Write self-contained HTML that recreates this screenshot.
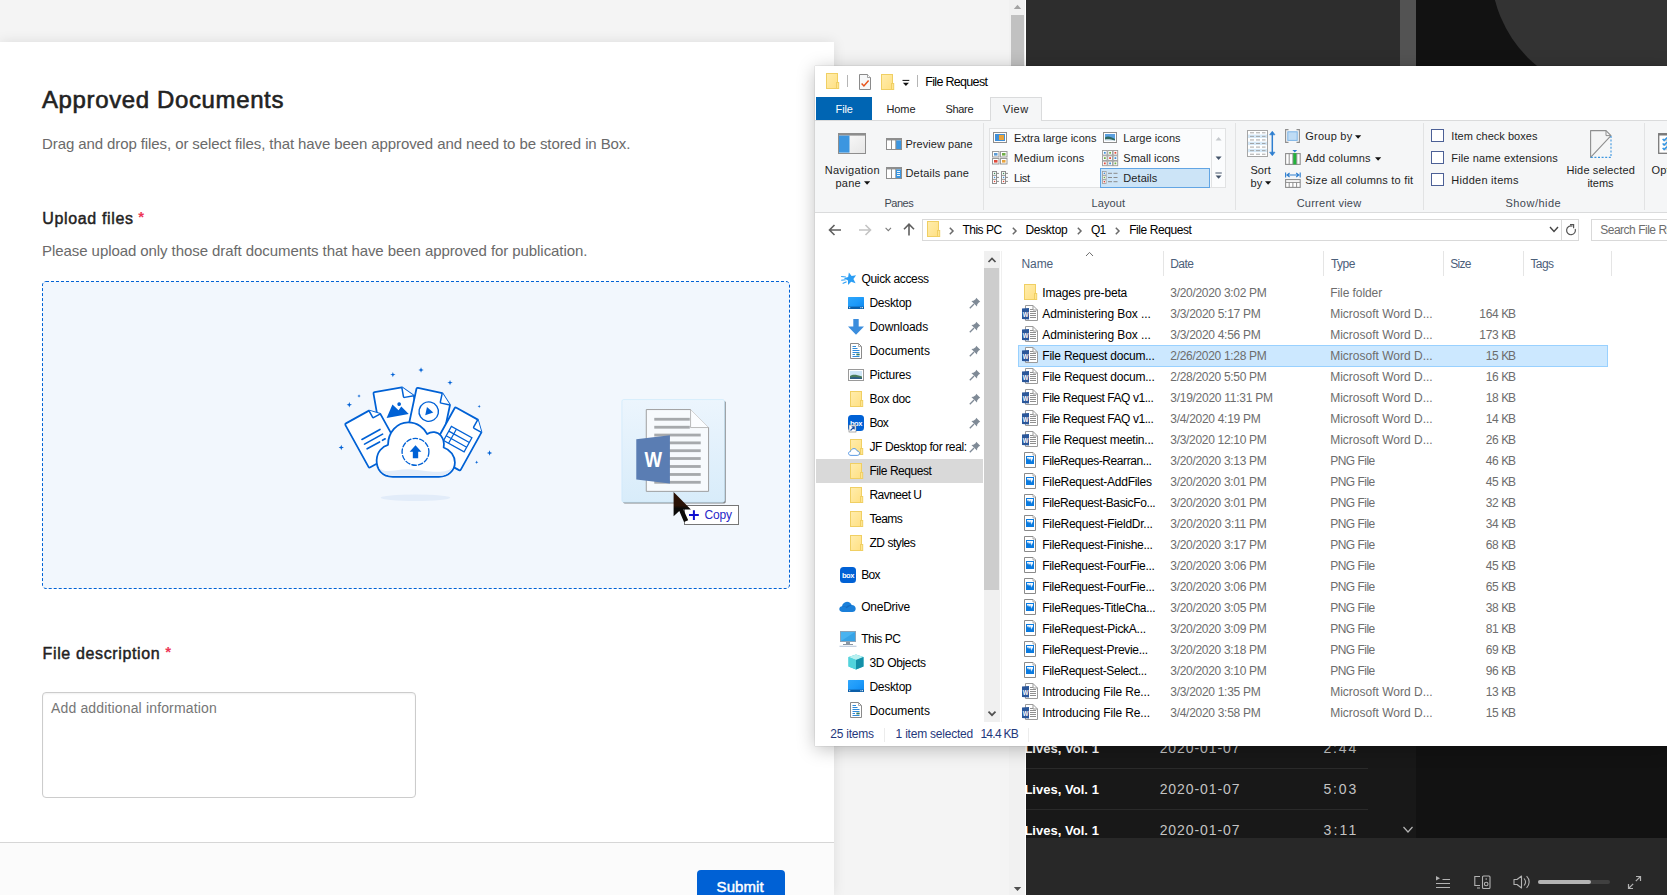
<!DOCTYPE html>
<html lang="en"><head><meta charset="utf-8"><title>Approved Documents</title>
<style>
html,body{margin:0;padding:0;}
body{width:1667px;height:895px;overflow:hidden;position:relative;background:#f4f4f4;font-family:"Liberation Sans",sans-serif;}
.t{position:absolute;white-space:pre;line-height:20px;font-size:12px;}
.layer{position:absolute;left:0;top:0;width:1667px;height:895px;overflow:hidden;}
svg{overflow:visible}
</style></head>
<body>
<svg width="0" height="0" style="position:absolute"><defs>
<linearGradient id="gfold" x1="0" y1="0" x2="1" y2="1"><stop offset="0" stop-color="#ffedad"/><stop offset="1" stop-color="#ffe083"/></linearGradient>
<linearGradient id="gdesk" x1="0" y1="0" x2="1" y2="1"><stop offset="0" stop-color="#2fa6fb"/><stop offset=".5" stop-color="#1e9bfa"/><stop offset="1" stop-color="#0c86ee"/></linearGradient>
</defs></svg>
<div class="layer" id="page"><div style="position:absolute;left:0px;top:42px;width:834px;height:853px;background:#fff;box-shadow:0 0 12px rgba(0,0,0,.10)"></div>
<div style="position:absolute;left:0px;top:842px;width:834px;height:53px;background:#fbfbfb;border-top:1px solid #d6d6d6;box-sizing:border-box"></div>
<span class="t" id="t1" style="top:90px;font-size:24px;color:#222;letter-spacing:0.628px;left:41.96px;-webkit-text-stroke:0.6px #222;">Approved Documents</span>
<span class="t" id="t2" style="top:134px;font-size:15px;color:#6a6a6a;letter-spacing:-0.097px;left:42.10px;">Drag and drop files, or select files, that have been approved and need to be stored in Box.</span>
<span class="t" id="t3" style="top:209px;font-size:16px;color:#222;letter-spacing:0.646px;left:42.24px;-webkit-text-stroke:0.45px #222;">Upload files</span>
<span class="t" id="t4" style="top:207px;font-size:15px;color:#ed3757;font-weight:700;letter-spacing:-0.044px;left:138.30px;">*</span>
<span class="t" id="t5" style="top:241px;font-size:15px;color:#6a6a6a;letter-spacing:-0.074px;left:42.10px;">Please upload only those draft documents that have been approved for publication.</span>
<div style="position:absolute;left:42px;top:281px;width:748px;height:308px;background:#f2f7fd;border-radius:4px"></div>
<svg style="position:absolute;left:42px;top:281px;" width="748" height="308" viewBox="0 0 748 308"><rect x="0.5" y="0.5" width="747" height="307" rx="3.5" fill="none" stroke="#0061d5" stroke-width="1" stroke-dasharray="3 2"/></svg>
<svg style="position:absolute;left:330px;top:360px;" width="170" height="150" viewBox="0 0 1014 895"><ellipse cx="510" cy="822" rx="208" ry="19" fill="#e2ecf9"/><g transform="translate(258,193) rotate(-10)"><path d="M8 0 H173 L235 62 V252 Q235 260 227 260 H8 Q0 260 0 252 V8 Q0 0 8 0Z" fill="#fff" stroke="#0061d5" stroke-width="10.5" stroke-linejoin="round"/><path d="M173 0 V56 Q173 62 179 62 H235" fill="#fff" stroke="#0061d5" stroke-width="9" stroke-linejoin="round"/><path d="M52 164 L100 92 L130 132 L150 112 L186 164Z" fill="#0061d5"/><circle cx="140" cy="96" r="11" fill="#0061d5"/></g><g transform="translate(517,165) rotate(12)"><path d="M8 0 H156 L216 60 V254 Q216 262 208 262 H8 Q0 262 0 254 V8 Q0 0 8 0Z" fill="#fff" stroke="#0061d5" stroke-width="10.5" stroke-linejoin="round"/><path d="M156 0 V54 Q156 60 162 60 H216" fill="#fff" stroke="#0061d5" stroke-width="9" stroke-linejoin="round"/><circle cx="100" cy="125" r="58" fill="none" stroke="#0061d5" stroke-width="8"/><path d="M84 100 L128 125 L84 150Z" fill="#0061d5"/></g><g transform="translate(88,382) rotate(-29)"><path d="M8 0 H165 L215 50 V292 Q215 300 207 300 H8 Q0 300 0 292 V8 Q0 0 8 0Z" fill="#fff" stroke="#0061d5" stroke-width="10.5" stroke-linejoin="round"/><path d="M165 0 V44 Q165 50 171 50 H215" fill="#fff" stroke="#0061d5" stroke-width="9" stroke-linejoin="round"/><path d="M45 130 H168 M45 162 H168 M45 194 H130 M150 194 H168" stroke="#0061d5" stroke-width="10" stroke-linecap="round"/></g><g transform="translate(747,281) rotate(29)"><path d="M8 0 H154 L210 56 V310 Q210 318 202 318 H8 Q0 318 0 310 V8 Q0 0 8 0Z" fill="#fff" stroke="#0061d5" stroke-width="10.5" stroke-linejoin="round"/><path d="M154 0 V50 Q154 56 160 56 H210" fill="#fff" stroke="#0061d5" stroke-width="9" stroke-linejoin="round"/><g fill="none" stroke="#0061d5" stroke-width="7.5"><rect x="36" y="112" width="140" height="96"/><path d="M36 144 H176 M36 176 H176 M70 112 V208"/></g></g><path d="M375 697 C310 697 277 652 278 598 C280 548 312 516 346 506 C346 432 400 372 466 372 C522 372 562 406 580 442 C604 424 642 426 662 452 C680 476 682 502 678 522 C720 536 745 572 745 612 C745 660 705 697 650 697 Z" fill="#fff" stroke="#0061d5" stroke-width="10.5" stroke-linejoin="round"/><path d="M292 640 C330 690 400 640 510 655 C620 668 690 680 732 640 C715 676 690 690 650 690 H375 C335 690 305 675 292 640Z" fill="#e3edfa"/><circle cx="510" cy="548" r="80" fill="none" stroke="#0061d5" stroke-width="8" stroke-dasharray="27 13" stroke-linecap="round"/><path d="M510 508 L545 548 H526 V586 H494 V548 H475Z" fill="#0061d5"/><path d="M375 71 L379.16 82.84 L391 87 L379.16 91.16 L375 103 L370.84 91.16 L359 87 L370.84 82.84Z" fill="#0061d5"/><path d="M543 44 L547.16 55.84 L559 60 L547.16 64.16 L543 76 L538.84 64.16 L527 60 L538.84 55.84Z" fill="#0061d5"/><path d="M716 119 L720.16 130.84 L732 135 L720.16 139.16 L716 151 L711.84 139.16 L700 135 L711.84 130.84Z" fill="#0061d5"/><path d="M173 205 L175.6 212.4 L183 215 L175.6 217.6 L173 225 L170.4 217.6 L163 215 L170.4 212.4Z" fill="#0061d5"/><path d="M115 251 L119.16 262.84 L131 267 L119.16 271.16 L115 283 L110.84 271.16 L99 267 L110.84 262.84Z" fill="#0061d5"/><path d="M67 506 L71.16 517.84 L83 522 L71.16 526.16 L67 538 L62.84 526.16 L51 522 L62.84 517.84Z" fill="#0061d5"/><path d="M890 267 L892.6 274.4 L900 277 L892.6 279.6 L890 287 L887.4 279.6 L880 277 L887.4 274.4Z" fill="#0061d5"/><path d="M952 539 L956.16 550.84 L968 555 L956.16 559.16 L952 571 L947.84 559.16 L936 555 L947.84 550.84Z" fill="#0061d5"/><path d="M875 600 L877.6 607.4 L885 610 L877.6 612.6 L875 620 L872.4 612.6 L865 610 L872.4 607.4Z" fill="#0061d5"/></svg>
<span class="t" id="t6" style="top:644px;font-size:16px;color:#222;letter-spacing:0.634px;left:42.54px;-webkit-text-stroke:0.45px #222;">File description</span>
<span class="t" id="t7" style="top:642px;font-size:15px;color:#ed3757;font-weight:700;letter-spacing:-0.044px;left:165.20px;">*</span>
<div style="position:absolute;left:42px;top:692px;width:374px;height:106px;box-sizing:border-box;border:1px solid #ccc;border-radius:4px;background:#fff;box-shadow:inset 0 1px 2px rgba(0,0,0,.06)"></div>
<span class="t" id="t8" style="top:698px;font-size:14px;color:#767676;letter-spacing:0.156px;left:50.96px;">Add additional information</span>
<div style="position:absolute;left:697px;top:870px;width:88px;height:40px;background:#0061d5;border-radius:4px"></div>
<span class="t" id="t9" style="top:877px;font-size:15px;color:#fff;letter-spacing:0.083px;left:716.60px;-webkit-text-stroke:0.45px #fff;">Submit</span>
<div style="position:absolute;left:1009px;top:0px;width:17px;height:895px;background:#f1f1f1"></div>
<div style="position:absolute;left:1025px;top:0px;width:1px;height:895px;background:#fff"></div>
<div style="position:absolute;left:1011px;top:15px;width:13px;height:700px;background:#c1c1c1"></div>
<svg style="position:absolute;left:1009px;top:0px;" width="17" height="17" viewBox="0 0 17 17"><path d="M4.8 8.9 L8.5 4.7 L12.2 8.9Z" fill="#a3a3a3"/></svg>
<svg style="position:absolute;left:1009px;top:878px;" width="17" height="17" viewBox="0 0 17 17"><path d="M4.8 9 L8.5 13 L12.2 9Z" fill="#505050"/></svg></div>
<div class="layer" id="music" style="left:1026px;width:641px"><div style="position:absolute;left:-1026px;top:0;width:1667px;height:895px"><div style="position:absolute;left:1026px;top:0px;width:374px;height:66px;background:#2d2d2d"></div>
<div style="position:absolute;left:1400px;top:0px;width:16px;height:66px;background:#535353"></div>
<div style="position:absolute;left:1416px;top:0px;width:251px;height:66px;background:#121212;overflow:hidden"></div>
<svg style="position:absolute;left:1416px;top:0px;overflow:hidden" width="251" height="66" viewBox="0 0 251 66"><circle cx="200" cy="-31" r="125" fill="#333"/></svg>
<div style="position:absolute;left:1026px;top:740px;width:390px;height:100px;background:#181818"></div>
<div style="position:absolute;left:1416px;top:740px;width:251px;height:100px;background:#121212"></div>
<div style="position:absolute;left:1026px;top:768px;width:342px;height:1px;background:#2a2a2a"></div>
<div style="position:absolute;left:1026px;top:809px;width:342px;height:1px;background:#2a2a2a"></div>
<span class="t" id="t10" style="top:739px;font-size:13px;color:#fff;font-weight:700;letter-spacing:0.023px;left:1024.42px;">Lives, Vol. 1</span>
<span class="t" id="t11" style="top:738px;font-size:14px;color:#c4c4c4;letter-spacing:0.917px;left:1159.66px;">2020-01-07</span>
<span class="t" id="t12" style="top:738px;font-size:14px;color:#c4c4c4;letter-spacing:1.843px;left:1323.46px;">2:44</span>
<span class="t" id="t13" style="top:780px;font-size:13px;color:#fff;font-weight:700;letter-spacing:0.023px;left:1024.42px;">Lives, Vol. 1</span>
<span class="t" id="t14" style="top:779px;font-size:14px;color:#c4c4c4;letter-spacing:0.917px;left:1159.66px;">2020-01-07</span>
<span class="t" id="t15" style="top:779px;font-size:14px;color:#c4c4c4;letter-spacing:1.843px;left:1323.46px;">5:03</span>
<span class="t" id="t16" style="top:821px;font-size:13px;color:#fff;font-weight:700;letter-spacing:0.023px;left:1024.42px;">Lives, Vol. 1</span>
<span class="t" id="t17" style="top:820px;font-size:14px;color:#c4c4c4;letter-spacing:0.917px;left:1159.66px;">2020-01-07</span>
<span class="t" id="t18" style="top:820px;font-size:14px;color:#c4c4c4;letter-spacing:2.187px;left:1323.46px;">3:11</span>
<svg style="position:absolute;left:1402px;top:825px;" width="12" height="9" viewBox="0 0 12 9"><path d="M1.5 2 L6 7 L10.5 2" fill="none" stroke="#b3b3b3" stroke-width="1.2"/></svg>
<div style="position:absolute;left:1026px;top:838px;width:641px;height:57px;background:#282828"></div>
<svg style="position:absolute;left:1435px;top:875px;" width="16" height="14" viewBox="0 0 16 14"><path d="M1 1 L5 3.2 L1 5.4Z" fill="#b3b3b3"/><path d="M7.5 4.5H15M1 8.5H15M1 12.5H15" stroke="#b3b3b3" stroke-width="1.1"/></svg>
<svg style="position:absolute;left:1474px;top:875px;" width="17" height="14" viewBox="0 0 17 14"><path d="M6 1.5 H0.8 V10.5 H6 M3 13 H6" fill="none" stroke="#b3b3b3" stroke-width="1.1"/><rect x="8.5" y="1" width="7.5" height="12.5" rx="1" fill="none" stroke="#b3b3b3" stroke-width="1.1"/><circle cx="12.2" cy="9" r="1.8" fill="none" stroke="#b3b3b3" stroke-width="1.1"/><circle cx="12.2" cy="4" r=".8" fill="#b3b3b3"/></svg>
<svg style="position:absolute;left:1513px;top:875px;" width="18" height="14" viewBox="0 0 18 14"><path d="M1 4.5 H4 L8.5 1 V13 L4 9.5 H1 Z" fill="none" stroke="#b3b3b3" stroke-width="1.1" stroke-linejoin="round"/><path d="M11 3.5 C12.8 5.5 12.8 8.5 11 10.5 M13.6 1.2 C17 4.5 17 9.5 13.6 12.8" fill="none" stroke="#b3b3b3" stroke-width="1.1"/></svg>
<div style="position:absolute;left:1538px;top:880px;width:72px;height:4px;background:#404040;border-radius:2px"></div>
<div style="position:absolute;left:1538px;top:880px;width:53px;height:4px;background:#b3b3b3;border-radius:2px"></div>
<svg style="position:absolute;left:1627px;top:875px;" width="15" height="15" viewBox="0 0 15 15"><path d="M9 1.5 H13.5 V6 M13.5 1.5 L8.8 6.2 M6 13.5 H1.5 V9 M1.5 13.5 L6.2 8.8" fill="none" stroke="#b3b3b3" stroke-width="1.2"/></svg></div></div>
<div id="win" style="position:absolute;left:815px;top:66px;width:852px;height:680px;background:#fff;overflow:hidden;box-shadow:0 3px 17px 0 rgba(0,0,0,.25),0 0 1px rgba(0,0,0,.3)"><div style="position:absolute;left:-815px;top:-66px;width:1667px;height:895px"><svg style="position:absolute;left:824.5px;top:73px" width="16" height="16" viewBox="0 0 16 16"><rect x="1.5" y="0.5" width="11" height="15" fill="url(#gfold)" stroke="#f0cf63" stroke-width="1"/> <rect x="11.5" y="9.5" width="2.2" height="6" fill="#ffe591" stroke="#f0cf63" stroke-width="1"/></svg>
<div style="position:absolute;left:847px;top:75px;width:1px;height:12px;background:#b5b5b5"></div>
<svg style="position:absolute;left:859px;top:74px;" width="13" height="16" viewBox="0 0 13 16"><path d="M0.5 0.5 H8.5 L11.5 3.5 V15.5 H0.5Z" fill="#f7f8f9" stroke="#8a8a8a"/><path d="M8.5 0.5 V3.5 H11.5" fill="#fff" stroke="#8a8a8a" stroke-width=".8"/><path d="M2.6 9.6 L4.9 12 L9.6 6.4" fill="none" stroke="#e8541c" stroke-width="1.5"/></svg>
<svg style="position:absolute;left:879.5px;top:74px" width="16" height="16" viewBox="0 0 16 16"><rect x="1.5" y="0.5" width="11" height="15" fill="url(#gfold)" stroke="#f0cf63" stroke-width="1"/> <rect x="11.5" y="9.5" width="2.2" height="6" fill="#ffe591" stroke="#f0cf63" stroke-width="1"/></svg>
<svg style="position:absolute;left:902px;top:80px;" width="8" height="7" viewBox="0 0 8 7"><path d="M0.5 0.4 H7.3" stroke="#111" stroke-width="1"/><path d="M0.9 2.8 H6.9 L3.9 5.9Z" fill="#111"/></svg>
<div style="position:absolute;left:917px;top:75px;width:1px;height:12px;background:#b5b5b5"></div>
<span class="t" id="t19" style="top:72px;font-size:12.5px;color:#000;letter-spacing:-0.681px;left:925.25px;">File Request</span>
<div style="position:absolute;left:816px;top:97px;width:56px;height:23px;background:#0065b3"></div>
<span class="t" id="t20" style="top:99px;font-size:11px;color:#fff;letter-spacing:-0.105px;left:835.54px;">File</span>
<span class="t" id="t21" style="top:99px;font-size:11px;color:#222;letter-spacing:-0.075px;left:886.44px;">Home</span>
<span class="t" id="t22" style="top:99px;font-size:11px;color:#222;letter-spacing:-0.335px;left:945.54px;">Share</span>
<div style="position:absolute;left:815px;top:120px;width:852px;height:1px;background:#dadbdc"></div>
<div style="position:absolute;left:815px;top:121px;width:852px;height:91px;background:#f5f6f7"></div>
<div style="position:absolute;left:990px;top:97px;width:52px;height:24px;background:#f5f6f7;border:1px solid #dadbdc;border-bottom:none;box-sizing:border-box"></div>
<span class="t" id="t23" style="top:99px;font-size:11px;color:#222;letter-spacing:0.488px;left:1003.04px;">View</span>
<div style="position:absolute;left:815px;top:212px;width:852px;height:1px;background:#dadbdc"></div>
<svg style="position:absolute;left:838px;top:133px;" width="28" height="21" viewBox="0 0 28 21"><defs><linearGradient id="gnp" x1="0" y1="0" x2="1" y2="1"><stop offset="0" stop-color="#fdfdfd"/><stop offset="1" stop-color="#e6e6e6"/></linearGradient></defs><rect x="0.5" y="0.5" width="27" height="20" fill="url(#gnp)" stroke="#8e8e8e" stroke-width="1"/><rect x="1" y="1" width="26" height="1.6" fill="#8e8e8e"/><rect x="1" y="2.6" width="10.5" height="17" fill="#3c96e0"/></svg>
<span class="t" id="t24" style="top:160px;font-size:11px;color:#1e1e1e;letter-spacing:0.337px;left:824.64px;">Navigation</span>
<span class="t" id="t25" style="top:173px;font-size:11px;color:#1e1e1e;letter-spacing:0.212px;left:835.54px;">pane</span>
<svg style="position:absolute;left:864px;top:180.6px;" width="7" height="4" viewBox="0 0 7 4"><path d="M0 0.3 H6.2 L3.1 3.7Z" fill="#111"/></svg>
<svg style="position:absolute;left:886px;top:138px;" width="16" height="12" viewBox="0 0 16 12"><rect x="0.5" y="0.5" width="15" height="11" fill="#fff" stroke="#8e8e8e"/><rect x="1" y="1" width="14" height="1.4" fill="#8e8e8e"/><rect x="10" y="2.4" width="5" height="8.6" fill="#3c96e0"/><path d="M5.5 1 V11 M9.8 1 V11" stroke="#8e8e8e" stroke-width="1"/></svg>
<span class="t" id="t26" style="top:134px;font-size:11px;color:#1e1e1e;letter-spacing:0.051px;left:905.44px;">Preview pane</span>
<svg style="position:absolute;left:886px;top:167px;" width="16" height="12" viewBox="0 0 16 12"><rect x="0.5" y="0.5" width="15" height="11" fill="#fff" stroke="#8e8e8e"/><rect x="1" y="1" width="14" height="1.4" fill="#8e8e8e"/><path d="M5.5 1 V11 M9.8 1 V11" stroke="#8e8e8e" stroke-width="1"/><rect x="10" y="2.4" width="5" height="8.6" fill="#3c96e0"/><path d="M11 4.5H14M11 6.5H14M11 8.5H14" stroke="#fff" stroke-width=".9"/></svg>
<span class="t" id="t27" style="top:163px;font-size:11px;color:#1e1e1e;letter-spacing:0.206px;left:905.44px;">Details pane</span>
<span class="t" id="t28" style="top:193px;font-size:11px;color:#414852;letter-spacing:-0.471px;left:884.44px;">Panes</span>
<div style="position:absolute;left:983px;top:123px;width:1px;height:87px;background:#e2e3e4"></div>
<div style="position:absolute;left:989px;top:128px;width:237px;height:60px;background:#fbfcfd;border:1px solid #e1e2e3;box-sizing:border-box"></div>
<div style="position:absolute;left:1211px;top:129px;width:1px;height:58px;background:#e1e2e3"></div>
<svg style="position:absolute;left:993px;top:132px;" width="14" height="11" viewBox="0 0 14 11"><rect x="0.5" y="0.5" width="13" height="10" fill="#fff" stroke="#8e8e8e"/><rect x="2" y="2" width="10" height="7" fill="#3f8fd8"/><rect x="6.0" y="3" width="5.0" height="5" fill="#e8a33d"/></svg>
<span class="t" id="t29" style="top:128px;font-size:11px;color:#1e1e1e;letter-spacing:0.030px;left:1014.04px;">Extra large icons</span>
<svg style="position:absolute;left:1103px;top:132px;" width="14" height="11" viewBox="0 0 14 11"><rect x="0.5" y="0.5" width="13" height="10" fill="#fff" stroke="#8e8e8e"/><rect x="2" y="2" width="10" height="7" fill="#5aa0e0"/><path d="M2 5.5 C5 3.5 8 5 12 7 V9 H2Z" fill="#2f6a62"/><path d="M2 7.5 C5 7 8 7.5 12 8.4 V9 H2Z" fill="#dfeaf2"/></svg>
<span class="t" id="t30" style="top:128px;font-size:11px;color:#1e1e1e;letter-spacing:0.035px;left:1123.34px;">Large icons</span>
<svg style="position:absolute;left:992px;top:151px;" width="16" height="14" viewBox="0 0 16 14"><rect x="0.5" y="0.5" width="6.5" height="5.5" fill="#fff" stroke="#9a9a9a" stroke-width="1"/><rect x="2" y="2" width="3.5" height="2.6" fill="#5b9bd5"/><rect x="8.5" y="0.5" width="6.5" height="5.5" fill="#fff" stroke="#9a9a9a" stroke-width="1"/><rect x="10" y="2" width="3.5" height="2.6" fill="#70ad47"/><rect x="0.5" y="7.5" width="6.5" height="5.5" fill="#fff" stroke="#9a9a9a" stroke-width="1"/><rect x="2" y="9" width="3.5" height="2.6" fill="#e04a3a"/><rect x="8.5" y="7.5" width="6.5" height="5.5" fill="#fff" stroke="#9a9a9a" stroke-width="1"/><rect x="10" y="9" width="3.5" height="2.6" fill="#e8a33d"/></svg>
<span class="t" id="t31" style="top:148px;font-size:11px;color:#1e1e1e;letter-spacing:0.224px;left:1014.04px;">Medium icons</span>
<svg style="position:absolute;left:1102px;top:150px;" width="16" height="16" viewBox="0 0 16 16"><rect x="0.5" y="0.5" width="4.6" height="4.6" fill="#fff" stroke="#9a9a9a" stroke-width=".9"/><rect x="1.9" y="1.9" width="1.8" height="1.8" fill="#3f8fd8"/><rect x="5.8" y="0.5" width="4.6" height="4.6" fill="#fff" stroke="#9a9a9a" stroke-width=".9"/><rect x="7.199999999999999" y="1.9" width="1.8" height="1.8" fill="#70ad47"/><rect x="11.1" y="0.5" width="4.6" height="4.6" fill="#fff" stroke="#9a9a9a" stroke-width=".9"/><rect x="12.5" y="1.9" width="1.8" height="1.8" fill="#e04a3a"/><rect x="0.5" y="5.8" width="4.6" height="4.6" fill="#fff" stroke="#9a9a9a" stroke-width=".9"/><rect x="1.9" y="7.199999999999999" width="1.8" height="1.8" fill="#70ad47"/><rect x="5.8" y="5.8" width="4.6" height="4.6" fill="#fff" stroke="#9a9a9a" stroke-width=".9"/><rect x="7.199999999999999" y="7.199999999999999" width="1.8" height="1.8" fill="#e04a3a"/><rect x="11.1" y="5.8" width="4.6" height="4.6" fill="#fff" stroke="#9a9a9a" stroke-width=".9"/><rect x="12.5" y="7.199999999999999" width="1.8" height="1.8" fill="#3f8fd8"/><rect x="0.5" y="11.1" width="4.6" height="4.6" fill="#fff" stroke="#9a9a9a" stroke-width=".9"/><rect x="1.9" y="12.5" width="1.8" height="1.8" fill="#e04a3a"/><rect x="5.8" y="11.1" width="4.6" height="4.6" fill="#fff" stroke="#9a9a9a" stroke-width=".9"/><rect x="7.199999999999999" y="12.5" width="1.8" height="1.8" fill="#3f8fd8"/><rect x="11.1" y="11.1" width="4.6" height="4.6" fill="#fff" stroke="#9a9a9a" stroke-width=".9"/><rect x="12.5" y="12.5" width="1.8" height="1.8" fill="#70ad47"/></svg>
<span class="t" id="t32" style="top:148px;font-size:11px;color:#1e1e1e;letter-spacing:0.017px;left:1123.34px;">Small icons</span>
<svg style="position:absolute;left:992px;top:171px;" width="17" height="13" viewBox="0 0 17 13"><rect x="0.5" y="0.5" width="4" height="12" fill="#fff" stroke="#8e8e8e" stroke-width="1"/><path d="M0.5 4.4 h4 M0.5 8.4 h4" stroke="#8e8e8e" stroke-width=".9"/><path d="M4.5 2.4 h2.5 M4.5 6.4 h2.5 M4.5 10.4 h2.5" stroke="#8e8e8e" stroke-width="1"/><rect x="1.9" y="1.8" width="1.3" height="1.3" fill="#3d8b57"/><rect x="1.9" y="5.8" width="1.3" height="1.3" fill="#3f8fd8"/><rect x="1.9" y="9.8" width="1.3" height="1.3" fill="#e04a3a"/><rect x="9.5" y="0.5" width="4" height="12" fill="#fff" stroke="#8e8e8e" stroke-width="1"/><path d="M9.5 4.4 h4 M9.5 8.4 h4" stroke="#8e8e8e" stroke-width=".9"/><path d="M13.5 2.4 h2.5 M13.5 6.4 h2.5 M13.5 10.4 h2.5" stroke="#8e8e8e" stroke-width="1"/><rect x="10.9" y="1.8" width="1.3" height="1.3" fill="#3d8b57"/><rect x="10.9" y="5.8" width="1.3" height="1.3" fill="#3f8fd8"/><rect x="10.9" y="9.8" width="1.3" height="1.3" fill="#e04a3a"/></svg>
<span class="t" id="t33" style="top:168px;font-size:11px;color:#1e1e1e;letter-spacing:-0.402px;left:1014.04px;">List</span>
<div style="position:absolute;left:1100px;top:168px;width:110px;height:20px;background:#cce4f7;border:1px solid #62a5e4;box-sizing:border-box"></div>
<svg style="position:absolute;left:1102px;top:171px;" width="16" height="14" viewBox="0 0 16 14"><rect x="0.5" y="0.5" width="3.6" height="3.6" fill="#fff" stroke="#9a9a9a" stroke-width=".8"/><rect x="1.6" y="1.6" width="1.4" height="1.4" fill="#3f8fd8"/><path d="M6 2.3 H10 M11.5 2.3 H15.5" stroke="#8a8a8a" stroke-width="1"/><rect x="0.5" y="4.7" width="3.6" height="3.6" fill="#fff" stroke="#9a9a9a" stroke-width=".8"/><rect x="1.6" y="5.800000000000001" width="1.4" height="1.4" fill="#70ad47"/><path d="M6 6.5 H10 M11.5 6.5 H15.5" stroke="#8a8a8a" stroke-width="1"/><rect x="0.5" y="8.9" width="3.6" height="3.6" fill="#fff" stroke="#9a9a9a" stroke-width=".8"/><rect x="1.6" y="10.0" width="1.4" height="1.4" fill="#e04a3a"/><path d="M6 10.7 H10 M11.5 10.7 H15.5" stroke="#8a8a8a" stroke-width="1"/></svg>
<span class="t" id="t34" style="top:168px;font-size:11px;color:#1e1e1e;letter-spacing:0.066px;left:1123.34px;">Details</span>
<svg style="position:absolute;left:1215px;top:136px;" width="8" height="5" viewBox="0 0 8 5"><path d="M0.6 4.4 L3.6 1 L6.6 4.4Z" fill="#c4c8cc"/></svg>
<svg style="position:absolute;left:1215px;top:156px;" width="8" height="5" viewBox="0 0 8 5"><path d="M0.6 0.6 L3.6 4 L6.6 0.6Z" fill="#44546a"/></svg>
<svg style="position:absolute;left:1215px;top:172px;" width="8" height="8" viewBox="0 0 8 8"><path d="M0.4 1 H6.8" stroke="#44546a" stroke-width="1"/><path d="M0.6 3.4 L3.6 6.8 L6.6 3.4Z" fill="#44546a"/></svg>
<span class="t" id="t35" style="top:193px;font-size:11px;color:#414852;letter-spacing:0.138px;left:1091.44px;">Layout</span>
<div style="position:absolute;left:1235px;top:123px;width:1px;height:87px;background:#e2e3e4"></div>
<svg style="position:absolute;left:1247px;top:130px;" width="29" height="27" viewBox="0 0 29 27"><rect x="0.5" y="0.5" width="20" height="26" fill="#fff" stroke="#a6a6a6"/><rect x="1" y="1.00" width="19" height="3.57" fill="#fff"/><path d="M3 2.80 H7 M9 2.80 H13 M15 2.80 H18.5" stroke="#9c9c9c" stroke-width=".9"/><rect x="1" y="4.57" width="19" height="3.57" fill="#d5e8f7"/><path d="M3 6.37 H7 M9 6.37 H13 M15 6.37 H18.5" stroke="#9c9c9c" stroke-width=".9"/><rect x="1" y="8.14" width="19" height="3.57" fill="#fff"/><path d="M3 9.94 H7 M9 9.94 H13 M15 9.94 H18.5" stroke="#9c9c9c" stroke-width=".9"/><rect x="1" y="11.71" width="19" height="3.57" fill="#d5e8f7"/><path d="M3 13.51 H7 M9 13.51 H13 M15 13.51 H18.5" stroke="#9c9c9c" stroke-width=".9"/><rect x="1" y="15.28" width="19" height="3.57" fill="#fff"/><path d="M3 17.08 H7 M9 17.08 H13 M15 17.08 H18.5" stroke="#9c9c9c" stroke-width=".9"/><rect x="1" y="18.85" width="19" height="3.57" fill="#d5e8f7"/><path d="M3 20.65 H7 M9 20.65 H13 M15 20.65 H18.5" stroke="#9c9c9c" stroke-width=".9"/><rect x="1" y="22.42" width="19" height="3.57" fill="#fff"/><path d="M3 24.22 H7 M9 24.22 H13 M15 24.22 H18.5" stroke="#9c9c9c" stroke-width=".9"/><path d="M25.3 2 V25" stroke="#2f7fd0" stroke-width="1.5"/><path d="M22.6 4.8 L25.3 1.2 L28 4.8Z M22.6 22.2 L25.3 25.8 L28 22.2Z" fill="#2f7fd0" stroke="#2f7fd0" stroke-width=".6"/></svg>
<span class="t" id="t36" style="top:160px;font-size:11px;color:#1e1e1e;letter-spacing:0.044px;left:1250.44px;">Sort</span>
<span class="t" id="t37" style="top:173px;font-size:11px;color:#1e1e1e;letter-spacing:0.095px;left:1250.44px;">by</span>
<svg style="position:absolute;left:1265px;top:180.6px;" width="7" height="4" viewBox="0 0 7 4"><path d="M0 0.3 H6.2 L3.1 3.7Z" fill="#111"/></svg>
<svg style="position:absolute;left:1285px;top:129px;" width="16" height="14" viewBox="0 0 16 14"><path d="M3.5 0.6 H0.6 V13.4 H3.5 M11.5 0.6 H14.4 V13.4 H11.5" fill="none" stroke="#8e8e8e" stroke-width="1.1"/><rect x="2.8" y="2.8" width="9.4" height="8.6" fill="#bfdcf5" stroke="#7db4e6" stroke-width="1"/></svg>
<span class="t" id="t38" style="top:126px;font-size:11px;color:#1e1e1e;letter-spacing:0.239px;left:1305.24px;">Group by</span>
<svg style="position:absolute;left:1355px;top:134.6px;" width="7" height="4" viewBox="0 0 7 4"><path d="M0 0.3 H6.2 L3.1 3.7Z" fill="#111"/></svg>
<svg style="position:absolute;left:1285px;top:149px;" width="17" height="16" viewBox="0 0 17 16"><path d="M7.4 1 H12.2 L9.8 3.4Z" fill="#2f7fd0"/><rect x="0.6" y="4.6" width="14.6" height="10.8" fill="#fff" stroke="#8e8e8e" stroke-width="1.1"/><rect x="8" y="4.2" width="3.7" height="11.2" fill="#22b33a"/><path d="M4.2 4.6 V15.4 M7.9 4.6 V15.4 M11.8 4.6 V15.4" stroke="#8e8e8e" stroke-width="1"/></svg>
<span class="t" id="t39" style="top:148px;font-size:11px;color:#1e1e1e;letter-spacing:0.173px;left:1305.24px;">Add columns</span>
<svg style="position:absolute;left:1375px;top:156.6px;" width="7" height="4" viewBox="0 0 7 4"><path d="M0 0.3 H6.2 L3.1 3.7Z" fill="#111"/></svg>
<svg style="position:absolute;left:1285px;top:172px;" width="17" height="16" viewBox="0 0 17 16"><path d="M0.6 0.5 V5.5 M15.2 0.5 V5.5 M2 3 H13.8 M4.6 1 L2 3 L4.6 5 M11.2 1 L13.8 3 L11.2 5" fill="none" stroke="#2f7fd0" stroke-width="1.1"/><rect x="0.6" y="7.6" width="14.6" height="7.8" fill="#fff" stroke="#8e8e8e" stroke-width="1.1"/><path d="M0.6 10.4 H15.2 M4.2 10.4 V15.4 M7.9 10.4 V15.4 M11.6 10.4 V15.4" stroke="#8e8e8e" stroke-width="1"/></svg>
<span class="t" id="t40" style="top:170px;font-size:11px;color:#1e1e1e;letter-spacing:0.209px;left:1305.24px;">Size all columns to fit</span>
<span class="t" id="t41" style="top:193px;font-size:11px;color:#414852;letter-spacing:0.252px;left:1296.64px;">Current view</span>
<div style="position:absolute;left:1423px;top:123px;width:1px;height:87px;background:#e2e3e4"></div>
<div style="position:absolute;left:1431px;top:129px;width:13px;height:13px;background:#fff;border:1px solid #4c6096;box-sizing:border-box"></div>
<div style="position:absolute;left:1431px;top:151px;width:13px;height:13px;background:#fff;border:1px solid #4c6096;box-sizing:border-box"></div>
<div style="position:absolute;left:1431px;top:173px;width:13px;height:13px;background:#fff;border:1px solid #4c6096;box-sizing:border-box"></div>
<span class="t" id="t42" style="top:126px;font-size:11px;color:#1e1e1e;letter-spacing:0.035px;left:1451.34px;">Item check boxes</span>
<span class="t" id="t43" style="top:148px;font-size:11px;color:#1e1e1e;letter-spacing:0.125px;left:1451.34px;">File name extensions</span>
<span class="t" id="t44" style="top:170px;font-size:11px;color:#1e1e1e;letter-spacing:0.265px;left:1451.34px;">Hidden items</span>
<svg style="position:absolute;left:1590px;top:130px;" width="22" height="28" viewBox="0 0 22 28"><path d="M0.6 0.6 H16 L21 5.6 L0.6 27.4Z" fill="#f4f4f4" stroke="#8e8e8e" stroke-width="1.1" stroke-linejoin="round"/><path d="M16 0.6 V5.6 H21" fill="none" stroke="#8e8e8e" stroke-width="1"/><path d="M21 6 V27.4 H0.6" fill="none" stroke="#3c96e0" stroke-width="1.1" stroke-dasharray="2 1.6"/></svg>
<span class="t" id="t45" style="top:160px;font-size:11px;color:#1e1e1e;letter-spacing:0.147px;left:1566.44px;">Hide selected</span>
<span class="t" id="t46" style="top:173px;font-size:11px;color:#1e1e1e;letter-spacing:-0.040px;left:1587.44px;">items</span>
<span class="t" id="t47" style="top:193px;font-size:11px;color:#414852;letter-spacing:0.481px;left:1505.44px;">Show/hide</span>
<div style="position:absolute;left:1644px;top:123px;width:1px;height:87px;background:#e2e3e4"></div>
<svg style="position:absolute;left:1658px;top:133px;" width="24" height="21" viewBox="0 0 24 21"><rect x="0.7" y="0.7" width="22" height="19.6" fill="#fff" stroke="#7a7a7a" stroke-width="1.3"/><rect x="0.7" y="0.7" width="22" height="1.8" fill="#7a7a7a"/><path d="M5 7 H12 M5 11.5 H12 M5 16 H12" stroke="#d0d0d0" stroke-width="2.4"/><path d="M4.6 6 L6.2 7.6 L9.2 4.4 M4.6 10.5 L6.2 12.1 L9.2 8.9 M4.6 15 L6.2 16.6 L9.2 13.4" fill="none" stroke="#2f96e8" stroke-width="1.4"/></svg>
<span class="t" id="t48" style="top:160px;font-size:11px;color:#1e1e1e;letter-spacing:0.200px;left:1651.54px;">Options</span>
<svg style="position:absolute;left:828px;top:224px;" width="14" height="12" viewBox="0 0 14 12"><path d="M13 6 H1.5 M6.5 1 L1.5 6 L6.5 11" fill="none" stroke="#5f5f5f" stroke-width="1.6"/></svg>
<svg style="position:absolute;left:858px;top:224px;" width="14" height="12" viewBox="0 0 14 12"><path d="M1 6 H12.5 M7.5 1 L12.5 6 L7.5 11" fill="none" stroke="#c4c4c4" stroke-width="1.6"/></svg>
<svg style="position:absolute;left:885px;top:227px;" width="7" height="5" viewBox="0 0 7 5"><path d="M0.6 0.8 L3.3 3.6 L6 0.8" fill="none" stroke="#7a7a7a" stroke-width="1.1"/></svg>
<svg style="position:absolute;left:903px;top:223px;" width="12" height="13" viewBox="0 0 12 13"><path d="M6 12.5 V1.5 M1 6.2 L6 1.2 L11 6.2" fill="none" stroke="#5f5f5f" stroke-width="1.6"/></svg>
<div style="position:absolute;left:922px;top:219px;width:657px;height:22px;background:#fff;border:1px solid #d9d9d9;box-sizing:border-box"></div>
<svg style="position:absolute;left:925.5px;top:221px" width="16" height="16" viewBox="0 0 16 16"><rect x="1.5" y="0.5" width="11" height="15" fill="url(#gfold)" stroke="#f0cf63" stroke-width="1"/> <rect x="11.5" y="9.5" width="2.2" height="6" fill="#ffe591" stroke="#f0cf63" stroke-width="1"/></svg>
<svg style="position:absolute;left:948.5px;top:227px;" width="5" height="8" viewBox="0 0 5 8"><path d="M0.8 0.8 L4 4 L0.8 7.2" fill="none" stroke="#6a6a6a" stroke-width="1.5"/></svg>
<span class="t" id="t49" style="top:220px;font-size:12px;color:#000;letter-spacing:-0.475px;left:962.38px;">This PC</span>
<svg style="position:absolute;left:1011.5px;top:227px;" width="5" height="8" viewBox="0 0 5 8"><path d="M0.8 0.8 L4 4 L0.8 7.2" fill="none" stroke="#6a6a6a" stroke-width="1.5"/></svg>
<span class="t" id="t50" style="top:220px;font-size:12px;color:#000;letter-spacing:-0.282px;left:1025.38px;">Desktop</span>
<svg style="position:absolute;left:1077px;top:227px;" width="5" height="8" viewBox="0 0 5 8"><path d="M0.8 0.8 L4 4 L0.8 7.2" fill="none" stroke="#6a6a6a" stroke-width="1.5"/></svg>
<span class="t" id="t51" style="top:220px;font-size:12px;color:#000;letter-spacing:-0.700px;left:1090.88px;">Q1</span>
<svg style="position:absolute;left:1115.3px;top:227px;" width="5" height="8" viewBox="0 0 5 8"><path d="M0.8 0.8 L4 4 L0.8 7.2" fill="none" stroke="#6a6a6a" stroke-width="1.5"/></svg>
<span class="t" id="t52" style="top:220px;font-size:12px;color:#000;letter-spacing:-0.421px;left:1129.18px;">File Request</span>
<svg style="position:absolute;left:1549px;top:226px;" width="10" height="7" viewBox="0 0 10 7"><path d="M1 1 L5 5.4 L9 1" fill="none" stroke="#444" stroke-width="1.4"/></svg>
<div style="position:absolute;left:1561px;top:220px;width:1px;height:20px;background:#d9d9d9"></div>
<svg style="position:absolute;left:1565px;top:224px;" width="12" height="12" viewBox="0 0 12 12"><path d="M7.5 2.2 A4.4 4.4 0 1 0 10.2 5" fill="none" stroke="#555" stroke-width="1.2"/><path d="M5 0.6 H8.6 V4.2" fill="none" stroke="#555" stroke-width="1.2"/></svg>
<div style="position:absolute;left:1591px;top:219px;width:90px;height:22px;background:#fff;border:1px solid #d9d9d9;box-sizing:border-box"></div>
<span class="t" id="t53" style="top:220px;font-size:12px;color:#6d6d6d;letter-spacing:-0.483px;left:1600.18px;">Search File Request</span>
<div style="position:absolute;left:816px;top:459px;width:167px;height:24px;background:#d9d9d9"></div>
<svg style="position:absolute;left:841px;top:272px" width="16" height="14" viewBox="0 0 16 14"><g transform="rotate(-14 9 7)"><path d="M9.5 0.3 L11.3 4.5 L15.8 4.9 L12.3 7.9 L13.4 12.4 L9.5 10 L5.6 12.4 L6.7 7.9 L3.2 4.9 L7.7 4.5 Z" fill="#2a9df4"/> <path d="M1 2.5 L5.5 4 M0.2 6 L4.6 6.6 M0.8 9.6 L5 8.8" stroke="#2a9df4" stroke-width="1"/></g></svg>
<span class="t" id="t54" style="top:269px;font-size:12px;color:#000;letter-spacing:-0.338px;left:861.48px;">Quick access</span>
<svg style="position:absolute;left:848px;top:295px" width="16" height="16" viewBox="0 0 16 16"><rect x="0" y="2" width="16" height="12" rx="0.5" fill="url(#gdesk)"/> <rect x="0" y="11.6" width="16" height="2.4" fill="#0b5ea8"/> <rect x="1.2" y="12.2" width="1" height="1" fill="#fff"/> <rect x="12.4" y="12.2" width="1" height="1" fill="#fff"/><rect x="14" y="12.2" width="1" height="1" fill="#fff"/></svg>
<span class="t" id="t55" style="top:293px;font-size:12px;color:#000;letter-spacing:-0.299px;left:869.48px;">Desktop</span>
<svg style="position:absolute;left:969px;top:297px" width="12" height="12" viewBox="0 0 12 12"><path d="M7.2 0.8 L11.2 4.8 L9.8 5.4 L8.2 7.6 L8 9.6 L2.4 4 L4.4 3.8 L6.6 2.2 Z" fill="#7f8a96"/> <path d="M5 7 L0.8 11.2" stroke="#7f8a96" stroke-width="1.3"/></svg>
<svg style="position:absolute;left:848px;top:319px" width="16" height="16" viewBox="0 0 16 16"><path d="M5.3 0 H10.7 V7.6 H16 L8 15.8 L0 7.6 H5.3 Z" fill="#3b8ddd"/></svg>
<span class="t" id="t56" style="top:317px;font-size:12px;color:#000;letter-spacing:-0.079px;left:869.48px;">Downloads</span>
<svg style="position:absolute;left:969px;top:321px" width="12" height="12" viewBox="0 0 12 12"><path d="M7.2 0.8 L11.2 4.8 L9.8 5.4 L8.2 7.6 L8 9.6 L2.4 4 L4.4 3.8 L6.6 2.2 Z" fill="#7f8a96"/> <path d="M5 7 L0.8 11.2" stroke="#7f8a96" stroke-width="1.3"/></svg>
<svg style="position:absolute;left:848px;top:343px" width="16" height="16" viewBox="0 0 16 16"><path d="M2.5 0.5 H10.5 L13.5 3.5 V15.5 H2.5 Z" fill="#fff" stroke="#8a8a8a" stroke-width="1"/> <path d="M10.5 0.5 V3.5 H13.5" fill="none" stroke="#9a9a9a" stroke-width=".8"/> <path d="M4.5 3.5H8M4.5 5.5H9.5M4.5 7.5H11.5M4.5 9.5H11.5M4.5 11.5H7M8.5 11.5H11.5M4.5 13.5H11.5" stroke="#2f8ad9" stroke-width="1"/> <rect x="8.5" y="10.6" width="3" height="1.8" fill="#3b7d5c"/></svg>
<span class="t" id="t57" style="top:341px;font-size:12px;color:#000;letter-spacing:-0.033px;left:869.48px;">Documents</span>
<svg style="position:absolute;left:969px;top:345px" width="12" height="12" viewBox="0 0 12 12"><path d="M7.2 0.8 L11.2 4.8 L9.8 5.4 L8.2 7.6 L8 9.6 L2.4 4 L4.4 3.8 L6.6 2.2 Z" fill="#7f8a96"/> <path d="M5 7 L0.8 11.2" stroke="#7f8a96" stroke-width="1.3"/></svg>
<svg style="position:absolute;left:848px;top:367px" width="16" height="16" viewBox="0 0 16 16"><rect x="0.5" y="2.5" width="15" height="11" fill="#fff" stroke="#9a9a9a"/> <rect x="2" y="4" width="12" height="8" fill="#cfe6f7"/> <path d="M2 9 C5 7 8 7.5 14 9.5 V12 H2 Z" fill="#4a7d5a"/> <path d="M2 10.5 C6 9.5 10 10 14 11 V12 H2 Z" fill="#2d5d85"/></svg>
<span class="t" id="t58" style="top:365px;font-size:12px;color:#000;letter-spacing:-0.231px;left:869.48px;">Pictures</span>
<svg style="position:absolute;left:969px;top:369px" width="12" height="12" viewBox="0 0 12 12"><path d="M7.2 0.8 L11.2 4.8 L9.8 5.4 L8.2 7.6 L8 9.6 L2.4 4 L4.4 3.8 L6.6 2.2 Z" fill="#7f8a96"/> <path d="M5 7 L0.8 11.2" stroke="#7f8a96" stroke-width="1.3"/></svg>
<svg style="position:absolute;left:849px;top:391px" width="16" height="16" viewBox="0 0 16 16"><rect x="1.5" y="0.5" width="11" height="15" fill="url(#gfold)" stroke="#f0cf63" stroke-width="1"/> <rect x="11.5" y="9.5" width="2.2" height="6" fill="#ffe591" stroke="#f0cf63" stroke-width="1"/></svg>
<span class="t" id="t59" style="top:389px;font-size:12px;color:#000;letter-spacing:-0.337px;left:869.48px;">Box doc</span>
<svg style="position:absolute;left:969px;top:393px" width="12" height="12" viewBox="0 0 12 12"><path d="M7.2 0.8 L11.2 4.8 L9.8 5.4 L8.2 7.6 L8 9.6 L2.4 4 L4.4 3.8 L6.6 2.2 Z" fill="#7f8a96"/> <path d="M5 7 L0.8 11.2" stroke="#7f8a96" stroke-width="1.3"/></svg>
<svg style="position:absolute;left:848px;top:415px" width="16" height="16" viewBox="0 0 16 16"><rect x="0" y="0" width="16" height="16" rx="3.5" fill="#0061d5"/> <text x="8" y="10.6" font-size="7.5" font-weight="700" fill="#fff" text-anchor="middle" font-family="Liberation Sans, sans-serif" letter-spacing="-0.4">box</text></svg>
<span class="t" id="t60" style="top:413px;font-size:12px;color:#000;letter-spacing:-0.700px;left:869.48px;">Box</span>
<svg style="position:absolute;left:969px;top:417px" width="12" height="12" viewBox="0 0 12 12"><path d="M7.2 0.8 L11.2 4.8 L9.8 5.4 L8.2 7.6 L8 9.6 L2.4 4 L4.4 3.8 L6.6 2.2 Z" fill="#7f8a96"/> <path d="M5 7 L0.8 11.2" stroke="#7f8a96" stroke-width="1.3"/></svg>
<svg style="position:absolute;left:849px;top:439px" width="16" height="16" viewBox="0 0 16 16"><rect x="1.5" y="0.5" width="11" height="15" fill="url(#gfold)" stroke="#f0cf63" stroke-width="1"/> <rect x="11.5" y="9.5" width="2.2" height="6" fill="#ffe591" stroke="#f0cf63" stroke-width="1"/></svg>
<span class="t" id="t61" style="top:437px;font-size:12px;color:#000;letter-spacing:-0.372px;left:869.48px;">JF Desktop for real:</span>
<svg style="position:absolute;left:969px;top:441px" width="12" height="12" viewBox="0 0 12 12"><path d="M7.2 0.8 L11.2 4.8 L9.8 5.4 L8.2 7.6 L8 9.6 L2.4 4 L4.4 3.8 L6.6 2.2 Z" fill="#7f8a96"/> <path d="M5 7 L0.8 11.2" stroke="#7f8a96" stroke-width="1.3"/></svg>
<svg style="position:absolute;left:849px;top:463px" width="16" height="16" viewBox="0 0 16 16"><rect x="1.5" y="0.5" width="11" height="15" fill="url(#gfold)" stroke="#f0cf63" stroke-width="1"/> <rect x="11.5" y="9.5" width="2.2" height="6" fill="#ffe591" stroke="#f0cf63" stroke-width="1"/></svg>
<span class="t" id="t62" style="top:461px;font-size:12px;color:#000;letter-spacing:-0.449px;left:869.48px;">File Request</span>
<svg style="position:absolute;left:849px;top:487px" width="16" height="16" viewBox="0 0 16 16"><rect x="1.5" y="0.5" width="11" height="15" fill="url(#gfold)" stroke="#f0cf63" stroke-width="1"/> <rect x="11.5" y="9.5" width="2.2" height="6" fill="#ffe591" stroke="#f0cf63" stroke-width="1"/></svg>
<span class="t" id="t63" style="top:485px;font-size:12px;color:#000;letter-spacing:-0.533px;left:869.48px;">Ravneet U</span>
<svg style="position:absolute;left:849px;top:511px" width="16" height="16" viewBox="0 0 16 16"><rect x="1.5" y="0.5" width="11" height="15" fill="url(#gfold)" stroke="#f0cf63" stroke-width="1"/> <rect x="11.5" y="9.5" width="2.2" height="6" fill="#ffe591" stroke="#f0cf63" stroke-width="1"/></svg>
<span class="t" id="t64" style="top:509px;font-size:12px;color:#000;letter-spacing:-0.501px;left:869.48px;">Teams</span>
<svg style="position:absolute;left:849px;top:535px" width="16" height="16" viewBox="0 0 16 16"><rect x="1.5" y="0.5" width="11" height="15" fill="url(#gfold)" stroke="#f0cf63" stroke-width="1"/> <rect x="11.5" y="9.5" width="2.2" height="6" fill="#ffe591" stroke="#f0cf63" stroke-width="1"/></svg>
<span class="t" id="t65" style="top:533px;font-size:12px;color:#000;letter-spacing:-0.459px;left:869.48px;">ZD styles</span>
<svg style="position:absolute;left:848px;top:447.5px;" width="12" height="8" viewBox="0 0 12 8"><path d="M3 7.4 C1.4 7.4 0.5 6.4 0.5 5.4 C0.5 4.2 1.4 3.6 2.4 3.6 C2.8 1.8 4.2 0.6 6 0.6 C7.6 0.6 8.8 1.6 9.2 3 C10.6 3 11.5 4 11.5 5.2 C11.5 6.6 10.6 7.4 9.2 7.4Z" fill="#fff" stroke="#4a90e2" stroke-width=".9"/></svg>
<svg style="position:absolute;left:848.5px;top:424.5px;" width="7" height="7" viewBox="0 0 7 7"><rect x="0" y="0" width="7" height="7" fill="#fff" stroke="#777" stroke-width=".6"/><path d="M1.5 5.5 L5 2 M2.6 1.8 H5.2 V4.4" fill="none" stroke="#1a4fa0" stroke-width="1.1"/></svg>
<svg style="position:absolute;left:840px;top:567px" width="16" height="16" viewBox="0 0 16 16"><rect x="0" y="0" width="16" height="16" rx="3.5" fill="#0061d5"/> <text x="8" y="10.6" font-size="7.5" font-weight="700" fill="#fff" text-anchor="middle" font-family="Liberation Sans, sans-serif" letter-spacing="-0.4">box</text></svg>
<span class="t" id="t66" style="top:565px;font-size:12px;color:#000;letter-spacing:-0.700px;left:861.18px;">Box</span>
<svg style="position:absolute;left:839px;top:601px" width="17" height="12" viewBox="0 0 17 12"><path d="M4 11 C1.5 11 0.3 9.6 0.3 8 C0.3 6.4 1.6 5.3 3 5.2 C3.4 3 5.3 0.8 8 0.8 C10.3 0.8 12 2.2 12.7 4.1 C15 4.2 16.7 5.6 16.7 7.7 C16.7 9.7 15.2 11 13.2 11 Z" fill="#1a7fd9"/> <path d="M3 5.2 C5 5 6.5 5.8 7.6 7.2 L12.7 4.1 C10 3.6 8 4.6 7 6 C6 5 4.6 4.8 3 5.2Z" fill="#0f5fb4" opacity=".6"/></svg>
<span class="t" id="t67" style="top:597px;font-size:12px;color:#000;letter-spacing:-0.235px;left:861.18px;">OneDrive</span>
<svg style="position:absolute;left:839px;top:631px" width="18" height="16" viewBox="0 0 18 16"><rect x="1.5" y="0.5" width="15" height="10" fill="#52b1ec" stroke="#8aa3b8" stroke-width="1"/> <path d="M2 1 H16 V10 H2Z" fill="#49b3f0"/><path d="M2 10 L16 1 V10Z" fill="#37a3e6"/> <rect x="7" y="11" width="4" height="2" fill="#8a96a3"/> <rect x="4" y="13" width="10" height="1" fill="#8a96a3"/> <rect x="0.5" y="14.8" width="17" height="0.8" fill="#9fb4cc"/></svg>
<span class="t" id="t68" style="top:629px;font-size:12px;color:#000;letter-spacing:-0.508px;left:861.18px;">This PC</span>
<svg style="position:absolute;left:848px;top:654px" width="16" height="16" viewBox="0 0 16 16"><path d="M8 0.5 L15.5 3 V12.5 L8 15.5 L0.5 12.5 V3 Z" fill="#38c8d8"/> <path d="M8 0.5 L15.5 3 L8 6 L0.5 3 Z" fill="#b8f0f0"/> <path d="M8 6 L15.5 3 V12.5 L8 15.5 Z" fill="#1490a8"/> <path d="M8 6 L0.5 3 V12.5 L8 15.5 Z" fill="#52d4dc"/></svg>
<span class="t" id="t69" style="top:653px;font-size:12px;color:#000;letter-spacing:-0.324px;left:869.48px;">3D Objects</span>
<svg style="position:absolute;left:848px;top:678px" width="16" height="16" viewBox="0 0 16 16"><rect x="0" y="2" width="16" height="12" rx="0.5" fill="url(#gdesk)"/> <rect x="0" y="11.6" width="16" height="2.4" fill="#0b5ea8"/> <rect x="1.2" y="12.2" width="1" height="1" fill="#fff"/> <rect x="12.4" y="12.2" width="1" height="1" fill="#fff"/><rect x="14" y="12.2" width="1" height="1" fill="#fff"/></svg>
<span class="t" id="t70" style="top:677px;font-size:12px;color:#000;letter-spacing:-0.299px;left:869.48px;">Desktop</span>
<svg style="position:absolute;left:848px;top:702px" width="16" height="16" viewBox="0 0 16 16"><path d="M2.5 0.5 H10.5 L13.5 3.5 V15.5 H2.5 Z" fill="#fff" stroke="#8a8a8a" stroke-width="1"/> <path d="M10.5 0.5 V3.5 H13.5" fill="none" stroke="#9a9a9a" stroke-width=".8"/> <path d="M4.5 3.5H8M4.5 5.5H9.5M4.5 7.5H11.5M4.5 9.5H11.5M4.5 11.5H7M8.5 11.5H11.5M4.5 13.5H11.5" stroke="#2f8ad9" stroke-width="1"/> <rect x="8.5" y="10.6" width="3" height="1.8" fill="#3b7d5c"/></svg>
<span class="t" id="t71" style="top:701px;font-size:12px;color:#000;letter-spacing:-0.033px;left:869.48px;">Documents</span>
<div style="position:absolute;left:984px;top:251px;width:16px;height:471px;background:#f0f0f0"></div>
<div style="position:absolute;left:984px;top:268px;width:15px;height:322px;background:#cdcdcd"></div>
<svg style="position:absolute;left:984px;top:251px;" width="16" height="17" viewBox="0 0 16 17"><path d="M4.5 11 L8 7.4 L11.5 11" fill="none" stroke="#505050" stroke-width="1.7"/></svg>
<svg style="position:absolute;left:984px;top:705px;" width="16" height="17" viewBox="0 0 16 17"><path d="M4.5 6.6 L8 10.2 L11.5 6.6" fill="none" stroke="#505050" stroke-width="1.7"/></svg>
<div style="position:absolute;left:1001px;top:251px;width:1px;height:471px;background:#f0f0f0"></div>
<span class="t" id="t72" style="top:254px;font-size:12px;color:#4c607a;letter-spacing:-0.125px;left:1021.58px;">Name</span>
<svg style="position:absolute;left:1085px;top:251px;" width="9" height="6" viewBox="0 0 9 6"><path d="M1 5 L4.5 1.4 L8 5" fill="none" stroke="#6d6d6d" stroke-width="1"/></svg>
<div style="position:absolute;left:1163px;top:251px;width:1px;height:25px;background:#e5e5e5"></div>
<div style="position:absolute;left:1323px;top:251px;width:1px;height:25px;background:#e5e5e5"></div>
<div style="position:absolute;left:1443px;top:251px;width:1px;height:25px;background:#e5e5e5"></div>
<div style="position:absolute;left:1523px;top:251px;width:1px;height:25px;background:#e5e5e5"></div>
<div style="position:absolute;left:1611px;top:251px;width:1px;height:25px;background:#e5e5e5"></div>
<span class="t" id="t73" style="top:254px;font-size:12px;color:#4c607a;letter-spacing:-0.573px;left:1170.28px;">Date</span>
<span class="t" id="t74" style="top:254px;font-size:12px;color:#4c607a;letter-spacing:-0.459px;left:1330.88px;">Type</span>
<span class="t" id="t75" style="top:254px;font-size:12px;color:#4c607a;letter-spacing:-0.700px;left:1450.28px;">Size</span>
<span class="t" id="t76" style="top:254px;font-size:12px;color:#4c607a;letter-spacing:-0.540px;left:1530.38px;">Tags</span>
<div style="position:absolute;left:1018px;top:345px;width:590px;height:22px;background:#cce8ff;border:1px solid #99d1ff;box-sizing:border-box"></div>
<svg style="position:absolute;left:1023px;top:284px" width="16" height="16" viewBox="0 0 16 16"><rect x="1.5" y="0.5" width="11" height="15" fill="url(#gfold)" stroke="#f0cf63" stroke-width="1"/> <rect x="11.5" y="9.5" width="2.2" height="6" fill="#ffe591" stroke="#f0cf63" stroke-width="1"/></svg>
<span class="t" id="t77" style="top:283px;font-size:12px;color:#000;letter-spacing:-0.168px;left:1042.28px;">Images pre-beta</span>
<span class="t" id="t78" style="top:283px;font-size:12px;color:#6d6d6d;letter-spacing:-0.305px;left:1170.28px;">3/20/2020 3:02 PM</span>
<span class="t" id="t79" style="top:283px;font-size:12px;color:#6d6d6d;letter-spacing:-0.065px;left:1330.18px;">File folder</span>
<svg style="position:absolute;left:1021px;top:304.5px" width="17" height="17" viewBox="0 0 17 17"><path d="M4.5 0.5 H12 L16.5 5 V15.5 H4.5 Z" fill="#fff" stroke="#9a9a9a" stroke-width="1"/> <path d="M12 0.5 V5 H16.5" fill="none" stroke="#9a9a9a" stroke-width="1"/> <path d="M9 4.5H12M9 6.5H15M9 8.5H15M9 10.5H15M9 12.5H15" stroke="#8f8f8f" stroke-width="1"/> <path d="M1 3.6 L8 3 V14.6 L1 14 Z" fill="#2b579a"/> <text x="4.55" y="11.5" font-size="7.4" font-weight="700" fill="#fff" text-anchor="middle" font-family="Liberation Sans, sans-serif" textLength="5.6" lengthAdjust="spacingAndGlyphs">W</text></svg>
<span class="t" id="t80" style="top:304px;font-size:12px;color:#000;letter-spacing:-0.070px;left:1042.28px;">Administering Box ...</span>
<span class="t" id="t81" style="top:304px;font-size:12px;color:#6d6d6d;letter-spacing:-0.286px;left:1170.28px;">3/3/2020 5:17 PM</span>
<span class="t" id="t82" style="top:304px;font-size:12px;color:#6d6d6d;letter-spacing:0.004px;left:1330.18px;">Microsoft Word D...</span>
<span class="t" style="top:304px;right:152.40px;color:#6d6d6d;letter-spacing:-0.3px;word-spacing:-0.3px">164 <span style="letter-spacing:-1.3px">KB</span></span>
<svg style="position:absolute;left:1021px;top:325.5px" width="17" height="17" viewBox="0 0 17 17"><path d="M4.5 0.5 H12 L16.5 5 V15.5 H4.5 Z" fill="#fff" stroke="#9a9a9a" stroke-width="1"/> <path d="M12 0.5 V5 H16.5" fill="none" stroke="#9a9a9a" stroke-width="1"/> <path d="M9 4.5H12M9 6.5H15M9 8.5H15M9 10.5H15M9 12.5H15" stroke="#8f8f8f" stroke-width="1"/> <path d="M1 3.6 L8 3 V14.6 L1 14 Z" fill="#2b579a"/> <text x="4.55" y="11.5" font-size="7.4" font-weight="700" fill="#fff" text-anchor="middle" font-family="Liberation Sans, sans-serif" textLength="5.6" lengthAdjust="spacingAndGlyphs">W</text></svg>
<span class="t" id="t83" style="top:325px;font-size:12px;color:#000;letter-spacing:-0.070px;left:1042.28px;">Administering Box ...</span>
<span class="t" id="t84" style="top:325px;font-size:12px;color:#6d6d6d;letter-spacing:-0.286px;left:1170.28px;">3/3/2020 4:56 PM</span>
<span class="t" id="t85" style="top:325px;font-size:12px;color:#6d6d6d;letter-spacing:0.004px;left:1330.18px;">Microsoft Word D...</span>
<span class="t" style="top:325px;right:152.40px;color:#6d6d6d;letter-spacing:-0.3px;word-spacing:-0.3px">173 <span style="letter-spacing:-1.3px">KB</span></span>
<svg style="position:absolute;left:1021px;top:346.5px" width="17" height="17" viewBox="0 0 17 17"><path d="M4.5 0.5 H12 L16.5 5 V15.5 H4.5 Z" fill="#fff" stroke="#9a9a9a" stroke-width="1"/> <path d="M12 0.5 V5 H16.5" fill="none" stroke="#9a9a9a" stroke-width="1"/> <path d="M9 4.5H12M9 6.5H15M9 8.5H15M9 10.5H15M9 12.5H15" stroke="#8f8f8f" stroke-width="1"/> <path d="M1 3.6 L8 3 V14.6 L1 14 Z" fill="#2b579a"/> <text x="4.55" y="11.5" font-size="7.4" font-weight="700" fill="#fff" text-anchor="middle" font-family="Liberation Sans, sans-serif" textLength="5.6" lengthAdjust="spacingAndGlyphs">W</text></svg>
<span class="t" id="t86" style="top:346px;font-size:12px;color:#000;letter-spacing:-0.209px;left:1042.28px;">File Request docum...</span>
<span class="t" id="t87" style="top:346px;font-size:12px;color:#6d6d6d;letter-spacing:-0.305px;left:1170.28px;">2/26/2020 1:28 PM</span>
<span class="t" id="t88" style="top:346px;font-size:12px;color:#6d6d6d;letter-spacing:0.004px;left:1330.18px;">Microsoft Word D...</span>
<span class="t" style="top:346px;right:152.40px;color:#6d6d6d;letter-spacing:-0.3px;word-spacing:-0.3px">15 <span style="letter-spacing:-1.3px">KB</span></span>
<svg style="position:absolute;left:1021px;top:367.5px" width="17" height="17" viewBox="0 0 17 17"><path d="M4.5 0.5 H12 L16.5 5 V15.5 H4.5 Z" fill="#fff" stroke="#9a9a9a" stroke-width="1"/> <path d="M12 0.5 V5 H16.5" fill="none" stroke="#9a9a9a" stroke-width="1"/> <path d="M9 4.5H12M9 6.5H15M9 8.5H15M9 10.5H15M9 12.5H15" stroke="#8f8f8f" stroke-width="1"/> <path d="M1 3.6 L8 3 V14.6 L1 14 Z" fill="#2b579a"/> <text x="4.55" y="11.5" font-size="7.4" font-weight="700" fill="#fff" text-anchor="middle" font-family="Liberation Sans, sans-serif" textLength="5.6" lengthAdjust="spacingAndGlyphs">W</text></svg>
<span class="t" id="t89" style="top:367px;font-size:12px;color:#000;letter-spacing:-0.209px;left:1042.28px;">File Request docum...</span>
<span class="t" id="t90" style="top:367px;font-size:12px;color:#6d6d6d;letter-spacing:-0.305px;left:1170.28px;">2/28/2020 5:50 PM</span>
<span class="t" id="t91" style="top:367px;font-size:12px;color:#6d6d6d;letter-spacing:0.004px;left:1330.18px;">Microsoft Word D...</span>
<span class="t" style="top:367px;right:152.40px;color:#6d6d6d;letter-spacing:-0.3px;word-spacing:-0.3px">16 <span style="letter-spacing:-1.3px">KB</span></span>
<svg style="position:absolute;left:1021px;top:388.5px" width="17" height="17" viewBox="0 0 17 17"><path d="M4.5 0.5 H12 L16.5 5 V15.5 H4.5 Z" fill="#fff" stroke="#9a9a9a" stroke-width="1"/> <path d="M12 0.5 V5 H16.5" fill="none" stroke="#9a9a9a" stroke-width="1"/> <path d="M9 4.5H12M9 6.5H15M9 8.5H15M9 10.5H15M9 12.5H15" stroke="#8f8f8f" stroke-width="1"/> <path d="M1 3.6 L8 3 V14.6 L1 14 Z" fill="#2b579a"/> <text x="4.55" y="11.5" font-size="7.4" font-weight="700" fill="#fff" text-anchor="middle" font-family="Liberation Sans, sans-serif" textLength="5.6" lengthAdjust="spacingAndGlyphs">W</text></svg>
<span class="t" id="t92" style="top:388px;font-size:12px;color:#000;letter-spacing:-0.437px;left:1042.28px;">File Request FAQ v1...</span>
<span class="t" id="t93" style="top:388px;font-size:12px;color:#6d6d6d;letter-spacing:-0.268px;left:1170.28px;">3/19/2020 11:31 PM</span>
<span class="t" id="t94" style="top:388px;font-size:12px;color:#6d6d6d;letter-spacing:0.004px;left:1330.18px;">Microsoft Word D...</span>
<span class="t" style="top:388px;right:152.40px;color:#6d6d6d;letter-spacing:-0.3px;word-spacing:-0.3px">18 <span style="letter-spacing:-1.3px">KB</span></span>
<svg style="position:absolute;left:1021px;top:409.5px" width="17" height="17" viewBox="0 0 17 17"><path d="M4.5 0.5 H12 L16.5 5 V15.5 H4.5 Z" fill="#fff" stroke="#9a9a9a" stroke-width="1"/> <path d="M12 0.5 V5 H16.5" fill="none" stroke="#9a9a9a" stroke-width="1"/> <path d="M9 4.5H12M9 6.5H15M9 8.5H15M9 10.5H15M9 12.5H15" stroke="#8f8f8f" stroke-width="1"/> <path d="M1 3.6 L8 3 V14.6 L1 14 Z" fill="#2b579a"/> <text x="4.55" y="11.5" font-size="7.4" font-weight="700" fill="#fff" text-anchor="middle" font-family="Liberation Sans, sans-serif" textLength="5.6" lengthAdjust="spacingAndGlyphs">W</text></svg>
<span class="t" id="t95" style="top:409px;font-size:12px;color:#000;letter-spacing:-0.437px;left:1042.28px;">File Request FAQ v1...</span>
<span class="t" id="t96" style="top:409px;font-size:12px;color:#6d6d6d;letter-spacing:-0.286px;left:1170.28px;">3/4/2020 4:19 PM</span>
<span class="t" id="t97" style="top:409px;font-size:12px;color:#6d6d6d;letter-spacing:0.004px;left:1330.18px;">Microsoft Word D...</span>
<span class="t" style="top:409px;right:152.40px;color:#6d6d6d;letter-spacing:-0.3px;word-spacing:-0.3px">14 <span style="letter-spacing:-1.3px">KB</span></span>
<svg style="position:absolute;left:1021px;top:430.5px" width="17" height="17" viewBox="0 0 17 17"><path d="M4.5 0.5 H12 L16.5 5 V15.5 H4.5 Z" fill="#fff" stroke="#9a9a9a" stroke-width="1"/> <path d="M12 0.5 V5 H16.5" fill="none" stroke="#9a9a9a" stroke-width="1"/> <path d="M9 4.5H12M9 6.5H15M9 8.5H15M9 10.5H15M9 12.5H15" stroke="#8f8f8f" stroke-width="1"/> <path d="M1 3.6 L8 3 V14.6 L1 14 Z" fill="#2b579a"/> <text x="4.55" y="11.5" font-size="7.4" font-weight="700" fill="#fff" text-anchor="middle" font-family="Liberation Sans, sans-serif" textLength="5.6" lengthAdjust="spacingAndGlyphs">W</text></svg>
<span class="t" id="t98" style="top:430px;font-size:12px;color:#000;letter-spacing:-0.247px;left:1042.28px;">File Request meetin...</span>
<span class="t" id="t99" style="top:430px;font-size:12px;color:#6d6d6d;letter-spacing:-0.305px;left:1170.28px;">3/3/2020 12:10 PM</span>
<span class="t" id="t100" style="top:430px;font-size:12px;color:#6d6d6d;letter-spacing:0.004px;left:1330.18px;">Microsoft Word D...</span>
<span class="t" style="top:430px;right:152.40px;color:#6d6d6d;letter-spacing:-0.3px;word-spacing:-0.3px">26 <span style="letter-spacing:-1.3px">KB</span></span>
<svg style="position:absolute;left:1021.5px;top:452px" width="16" height="17" viewBox="0 0 16 17"><path d="M2.5 0.5 H11 L13.5 3 V15.5 H2.5 Z" fill="#fff" stroke="#8a8a8a" stroke-width="1"/> <path d="M11 0.5 V3 H13.5" fill="#f4f4f4" stroke="#9a9a9a" stroke-width=".8"/> <rect x="4" y="4" width="8" height="8" fill="#0a7be0"/> <path d="M5 5 H11 V8.6 L10.2 6.4 L9.4 9.8 L8.2 6.2 L7 8 L6 5.8 L5 7.6 Z" fill="#f2f8fe"/></svg>
<span class="t" id="t101" style="top:451px;font-size:12px;color:#000;letter-spacing:-0.421px;left:1042.28px;">FileReques-Rearran...</span>
<span class="t" id="t102" style="top:451px;font-size:12px;color:#6d6d6d;letter-spacing:-0.305px;left:1170.28px;">3/20/2020 3:13 PM</span>
<span class="t" id="t103" style="top:451px;font-size:12px;color:#6d6d6d;letter-spacing:-0.521px;left:1330.18px;">PNG File</span>
<span class="t" style="top:451px;right:152.40px;color:#6d6d6d;letter-spacing:-0.3px;word-spacing:-0.3px">46 <span style="letter-spacing:-1.3px">KB</span></span>
<svg style="position:absolute;left:1021.5px;top:473px" width="16" height="17" viewBox="0 0 16 17"><path d="M2.5 0.5 H11 L13.5 3 V15.5 H2.5 Z" fill="#fff" stroke="#8a8a8a" stroke-width="1"/> <path d="M11 0.5 V3 H13.5" fill="#f4f4f4" stroke="#9a9a9a" stroke-width=".8"/> <rect x="4" y="4" width="8" height="8" fill="#0a7be0"/> <path d="M5 5 H11 V8.6 L10.2 6.4 L9.4 9.8 L8.2 6.2 L7 8 L6 5.8 L5 7.6 Z" fill="#f2f8fe"/></svg>
<span class="t" id="t104" style="top:472px;font-size:12px;color:#000;letter-spacing:-0.267px;left:1042.28px;">FileRequest-AddFiles</span>
<span class="t" id="t105" style="top:472px;font-size:12px;color:#6d6d6d;letter-spacing:-0.305px;left:1170.28px;">3/20/2020 3:01 PM</span>
<span class="t" id="t106" style="top:472px;font-size:12px;color:#6d6d6d;letter-spacing:-0.521px;left:1330.18px;">PNG File</span>
<span class="t" style="top:472px;right:152.40px;color:#6d6d6d;letter-spacing:-0.3px;word-spacing:-0.3px">45 <span style="letter-spacing:-1.3px">KB</span></span>
<svg style="position:absolute;left:1021.5px;top:494px" width="16" height="17" viewBox="0 0 16 17"><path d="M2.5 0.5 H11 L13.5 3 V15.5 H2.5 Z" fill="#fff" stroke="#8a8a8a" stroke-width="1"/> <path d="M11 0.5 V3 H13.5" fill="#f4f4f4" stroke="#9a9a9a" stroke-width=".8"/> <rect x="4" y="4" width="8" height="8" fill="#0a7be0"/> <path d="M5 5 H11 V8.6 L10.2 6.4 L9.4 9.8 L8.2 6.2 L7 8 L6 5.8 L5 7.6 Z" fill="#f2f8fe"/></svg>
<span class="t" id="t107" style="top:493px;font-size:12px;color:#000;letter-spacing:-0.379px;left:1042.28px;">FileRequest-BasicFo...</span>
<span class="t" id="t108" style="top:493px;font-size:12px;color:#6d6d6d;letter-spacing:-0.305px;left:1170.28px;">3/20/2020 3:01 PM</span>
<span class="t" id="t109" style="top:493px;font-size:12px;color:#6d6d6d;letter-spacing:-0.521px;left:1330.18px;">PNG File</span>
<span class="t" style="top:493px;right:152.40px;color:#6d6d6d;letter-spacing:-0.3px;word-spacing:-0.3px">32 <span style="letter-spacing:-1.3px">KB</span></span>
<svg style="position:absolute;left:1021.5px;top:515px" width="16" height="17" viewBox="0 0 16 17"><path d="M2.5 0.5 H11 L13.5 3 V15.5 H2.5 Z" fill="#fff" stroke="#8a8a8a" stroke-width="1"/> <path d="M11 0.5 V3 H13.5" fill="#f4f4f4" stroke="#9a9a9a" stroke-width=".8"/> <rect x="4" y="4" width="8" height="8" fill="#0a7be0"/> <path d="M5 5 H11 V8.6 L10.2 6.4 L9.4 9.8 L8.2 6.2 L7 8 L6 5.8 L5 7.6 Z" fill="#f2f8fe"/></svg>
<span class="t" id="t110" style="top:514px;font-size:12px;color:#000;letter-spacing:-0.262px;left:1042.28px;">FileRequest-FieldDr...</span>
<span class="t" id="t111" style="top:514px;font-size:12px;color:#6d6d6d;letter-spacing:-0.249px;left:1170.28px;">3/20/2020 3:11 PM</span>
<span class="t" id="t112" style="top:514px;font-size:12px;color:#6d6d6d;letter-spacing:-0.521px;left:1330.18px;">PNG File</span>
<span class="t" style="top:514px;right:152.40px;color:#6d6d6d;letter-spacing:-0.3px;word-spacing:-0.3px">34 <span style="letter-spacing:-1.3px">KB</span></span>
<svg style="position:absolute;left:1021.5px;top:536px" width="16" height="17" viewBox="0 0 16 17"><path d="M2.5 0.5 H11 L13.5 3 V15.5 H2.5 Z" fill="#fff" stroke="#8a8a8a" stroke-width="1"/> <path d="M11 0.5 V3 H13.5" fill="#f4f4f4" stroke="#9a9a9a" stroke-width=".8"/> <rect x="4" y="4" width="8" height="8" fill="#0a7be0"/> <path d="M5 5 H11 V8.6 L10.2 6.4 L9.4 9.8 L8.2 6.2 L7 8 L6 5.8 L5 7.6 Z" fill="#f2f8fe"/></svg>
<span class="t" id="t113" style="top:535px;font-size:12px;color:#000;letter-spacing:-0.294px;left:1042.28px;">FileRequest-Finishe...</span>
<span class="t" id="t114" style="top:535px;font-size:12px;color:#6d6d6d;letter-spacing:-0.305px;left:1170.28px;">3/20/2020 3:17 PM</span>
<span class="t" id="t115" style="top:535px;font-size:12px;color:#6d6d6d;letter-spacing:-0.521px;left:1330.18px;">PNG File</span>
<span class="t" style="top:535px;right:152.40px;color:#6d6d6d;letter-spacing:-0.3px;word-spacing:-0.3px">68 <span style="letter-spacing:-1.3px">KB</span></span>
<svg style="position:absolute;left:1021.5px;top:557px" width="16" height="17" viewBox="0 0 16 17"><path d="M2.5 0.5 H11 L13.5 3 V15.5 H2.5 Z" fill="#fff" stroke="#8a8a8a" stroke-width="1"/> <path d="M11 0.5 V3 H13.5" fill="#f4f4f4" stroke="#9a9a9a" stroke-width=".8"/> <rect x="4" y="4" width="8" height="8" fill="#0a7be0"/> <path d="M5 5 H11 V8.6 L10.2 6.4 L9.4 9.8 L8.2 6.2 L7 8 L6 5.8 L5 7.6 Z" fill="#f2f8fe"/></svg>
<span class="t" id="t116" style="top:556px;font-size:12px;color:#000;letter-spacing:-0.325px;left:1042.28px;">FileRequest-FourFie...</span>
<span class="t" id="t117" style="top:556px;font-size:12px;color:#6d6d6d;letter-spacing:-0.305px;left:1170.28px;">3/20/2020 3:06 PM</span>
<span class="t" id="t118" style="top:556px;font-size:12px;color:#6d6d6d;letter-spacing:-0.521px;left:1330.18px;">PNG File</span>
<span class="t" style="top:556px;right:152.40px;color:#6d6d6d;letter-spacing:-0.3px;word-spacing:-0.3px">45 <span style="letter-spacing:-1.3px">KB</span></span>
<svg style="position:absolute;left:1021.5px;top:578px" width="16" height="17" viewBox="0 0 16 17"><path d="M2.5 0.5 H11 L13.5 3 V15.5 H2.5 Z" fill="#fff" stroke="#8a8a8a" stroke-width="1"/> <path d="M11 0.5 V3 H13.5" fill="#f4f4f4" stroke="#9a9a9a" stroke-width=".8"/> <rect x="4" y="4" width="8" height="8" fill="#0a7be0"/> <path d="M5 5 H11 V8.6 L10.2 6.4 L9.4 9.8 L8.2 6.2 L7 8 L6 5.8 L5 7.6 Z" fill="#f2f8fe"/></svg>
<span class="t" id="t119" style="top:577px;font-size:12px;color:#000;letter-spacing:-0.325px;left:1042.28px;">FileRequest-FourFie...</span>
<span class="t" id="t120" style="top:577px;font-size:12px;color:#6d6d6d;letter-spacing:-0.305px;left:1170.28px;">3/20/2020 3:06 PM</span>
<span class="t" id="t121" style="top:577px;font-size:12px;color:#6d6d6d;letter-spacing:-0.521px;left:1330.18px;">PNG File</span>
<span class="t" style="top:577px;right:152.40px;color:#6d6d6d;letter-spacing:-0.3px;word-spacing:-0.3px">65 <span style="letter-spacing:-1.3px">KB</span></span>
<svg style="position:absolute;left:1021.5px;top:599px" width="16" height="17" viewBox="0 0 16 17"><path d="M2.5 0.5 H11 L13.5 3 V15.5 H2.5 Z" fill="#fff" stroke="#8a8a8a" stroke-width="1"/> <path d="M11 0.5 V3 H13.5" fill="#f4f4f4" stroke="#9a9a9a" stroke-width=".8"/> <rect x="4" y="4" width="8" height="8" fill="#0a7be0"/> <path d="M5 5 H11 V8.6 L10.2 6.4 L9.4 9.8 L8.2 6.2 L7 8 L6 5.8 L5 7.6 Z" fill="#f2f8fe"/></svg>
<span class="t" id="t122" style="top:598px;font-size:12px;color:#000;letter-spacing:-0.262px;left:1042.28px;">FileReques-TitleCha...</span>
<span class="t" id="t123" style="top:598px;font-size:12px;color:#6d6d6d;letter-spacing:-0.305px;left:1170.28px;">3/20/2020 3:05 PM</span>
<span class="t" id="t124" style="top:598px;font-size:12px;color:#6d6d6d;letter-spacing:-0.521px;left:1330.18px;">PNG File</span>
<span class="t" style="top:598px;right:152.40px;color:#6d6d6d;letter-spacing:-0.3px;word-spacing:-0.3px">38 <span style="letter-spacing:-1.3px">KB</span></span>
<svg style="position:absolute;left:1021.5px;top:620px" width="16" height="17" viewBox="0 0 16 17"><path d="M2.5 0.5 H11 L13.5 3 V15.5 H2.5 Z" fill="#fff" stroke="#8a8a8a" stroke-width="1"/> <path d="M11 0.5 V3 H13.5" fill="#f4f4f4" stroke="#9a9a9a" stroke-width=".8"/> <rect x="4" y="4" width="8" height="8" fill="#0a7be0"/> <path d="M5 5 H11 V8.6 L10.2 6.4 L9.4 9.8 L8.2 6.2 L7 8 L6 5.8 L5 7.6 Z" fill="#f2f8fe"/></svg>
<span class="t" id="t125" style="top:619px;font-size:12px;color:#000;letter-spacing:-0.256px;left:1042.28px;">FileRequest-PickA...</span>
<span class="t" id="t126" style="top:619px;font-size:12px;color:#6d6d6d;letter-spacing:-0.305px;left:1170.28px;">3/20/2020 3:09 PM</span>
<span class="t" id="t127" style="top:619px;font-size:12px;color:#6d6d6d;letter-spacing:-0.521px;left:1330.18px;">PNG File</span>
<span class="t" style="top:619px;right:152.40px;color:#6d6d6d;letter-spacing:-0.3px;word-spacing:-0.3px">81 <span style="letter-spacing:-1.3px">KB</span></span>
<svg style="position:absolute;left:1021.5px;top:641px" width="16" height="17" viewBox="0 0 16 17"><path d="M2.5 0.5 H11 L13.5 3 V15.5 H2.5 Z" fill="#fff" stroke="#8a8a8a" stroke-width="1"/> <path d="M11 0.5 V3 H13.5" fill="#f4f4f4" stroke="#9a9a9a" stroke-width=".8"/> <rect x="4" y="4" width="8" height="8" fill="#0a7be0"/> <path d="M5 5 H11 V8.6 L10.2 6.4 L9.4 9.8 L8.2 6.2 L7 8 L6 5.8 L5 7.6 Z" fill="#f2f8fe"/></svg>
<span class="t" id="t128" style="top:640px;font-size:12px;color:#000;letter-spacing:-0.315px;left:1042.28px;">FileRequest-Previe...</span>
<span class="t" id="t129" style="top:640px;font-size:12px;color:#6d6d6d;letter-spacing:-0.305px;left:1170.28px;">3/20/2020 3:18 PM</span>
<span class="t" id="t130" style="top:640px;font-size:12px;color:#6d6d6d;letter-spacing:-0.521px;left:1330.18px;">PNG File</span>
<span class="t" style="top:640px;right:152.40px;color:#6d6d6d;letter-spacing:-0.3px;word-spacing:-0.3px">69 <span style="letter-spacing:-1.3px">KB</span></span>
<svg style="position:absolute;left:1021.5px;top:662px" width="16" height="17" viewBox="0 0 16 17"><path d="M2.5 0.5 H11 L13.5 3 V15.5 H2.5 Z" fill="#fff" stroke="#8a8a8a" stroke-width="1"/> <path d="M11 0.5 V3 H13.5" fill="#f4f4f4" stroke="#9a9a9a" stroke-width=".8"/> <rect x="4" y="4" width="8" height="8" fill="#0a7be0"/> <path d="M5 5 H11 V8.6 L10.2 6.4 L9.4 9.8 L8.2 6.2 L7 8 L6 5.8 L5 7.6 Z" fill="#f2f8fe"/></svg>
<span class="t" id="t131" style="top:661px;font-size:12px;color:#000;letter-spacing:-0.328px;left:1042.28px;">FileRequest-Select...</span>
<span class="t" id="t132" style="top:661px;font-size:12px;color:#6d6d6d;letter-spacing:-0.305px;left:1170.28px;">3/20/2020 3:10 PM</span>
<span class="t" id="t133" style="top:661px;font-size:12px;color:#6d6d6d;letter-spacing:-0.521px;left:1330.18px;">PNG File</span>
<span class="t" style="top:661px;right:152.40px;color:#6d6d6d;letter-spacing:-0.3px;word-spacing:-0.3px">96 <span style="letter-spacing:-1.3px">KB</span></span>
<svg style="position:absolute;left:1021px;top:682.5px" width="17" height="17" viewBox="0 0 17 17"><path d="M4.5 0.5 H12 L16.5 5 V15.5 H4.5 Z" fill="#fff" stroke="#9a9a9a" stroke-width="1"/> <path d="M12 0.5 V5 H16.5" fill="none" stroke="#9a9a9a" stroke-width="1"/> <path d="M9 4.5H12M9 6.5H15M9 8.5H15M9 10.5H15M9 12.5H15" stroke="#8f8f8f" stroke-width="1"/> <path d="M1 3.6 L8 3 V14.6 L1 14 Z" fill="#2b579a"/> <text x="4.55" y="11.5" font-size="7.4" font-weight="700" fill="#fff" text-anchor="middle" font-family="Liberation Sans, sans-serif" textLength="5.6" lengthAdjust="spacingAndGlyphs">W</text></svg>
<span class="t" id="t134" style="top:682px;font-size:12px;color:#000;letter-spacing:-0.142px;left:1042.28px;">Introducing File Re...</span>
<span class="t" id="t135" style="top:682px;font-size:12px;color:#6d6d6d;letter-spacing:-0.286px;left:1170.28px;">3/3/2020 1:35 PM</span>
<span class="t" id="t136" style="top:682px;font-size:12px;color:#6d6d6d;letter-spacing:0.004px;left:1330.18px;">Microsoft Word D...</span>
<span class="t" style="top:682px;right:152.40px;color:#6d6d6d;letter-spacing:-0.3px;word-spacing:-0.3px">13 <span style="letter-spacing:-1.3px">KB</span></span>
<svg style="position:absolute;left:1021px;top:703.5px" width="17" height="17" viewBox="0 0 17 17"><path d="M4.5 0.5 H12 L16.5 5 V15.5 H4.5 Z" fill="#fff" stroke="#9a9a9a" stroke-width="1"/> <path d="M12 0.5 V5 H16.5" fill="none" stroke="#9a9a9a" stroke-width="1"/> <path d="M9 4.5H12M9 6.5H15M9 8.5H15M9 10.5H15M9 12.5H15" stroke="#8f8f8f" stroke-width="1"/> <path d="M1 3.6 L8 3 V14.6 L1 14 Z" fill="#2b579a"/> <text x="4.55" y="11.5" font-size="7.4" font-weight="700" fill="#fff" text-anchor="middle" font-family="Liberation Sans, sans-serif" textLength="5.6" lengthAdjust="spacingAndGlyphs">W</text></svg>
<span class="t" id="t137" style="top:703px;font-size:12px;color:#000;letter-spacing:-0.142px;left:1042.28px;">Introducing File Re...</span>
<span class="t" id="t138" style="top:703px;font-size:12px;color:#6d6d6d;letter-spacing:-0.286px;left:1170.28px;">3/4/2020 3:58 PM</span>
<span class="t" id="t139" style="top:703px;font-size:12px;color:#6d6d6d;letter-spacing:0.004px;left:1330.18px;">Microsoft Word D...</span>
<span class="t" style="top:703px;right:152.40px;color:#6d6d6d;letter-spacing:-0.3px;word-spacing:-0.3px">15 <span style="letter-spacing:-1.3px">KB</span></span>
<span class="t" id="t140" style="top:724px;font-size:12px;color:#1f387c;letter-spacing:-0.231px;left:830.28px;">25 items</span>
<div style="position:absolute;left:884px;top:728px;width:1px;height:14px;background:#ececec"></div>
<span class="t" id="t141" style="top:724px;font-size:12px;color:#1f387c;letter-spacing:-0.220px;left:895.58px;">1 item selected</span>
<span class="t" id="t142" style="top:724px;font-size:12px;color:#1f387c;letter-spacing:-0.700px;left:980.38px;">14.4 KB</span>
<div style="position:absolute;left:1028px;top:728px;width:1px;height:14px;background:#ececec"></div></div></div>
<div class="layer" id="drag" style="pointer-events:none"><svg style="position:absolute;left:610px;top:390px;" width="140" height="140" viewBox="0 0 895 895"><defs><linearGradient id="gdr" x1="0" y1="0" x2="0" y2="1"><stop offset="0" stop-color="#ecf5fd"/><stop offset="1" stop-color="#d8ecfa"/></linearGradient><filter id="fsh" x="-10%" y="-10%" width="130%" height="130%"><feGaussianBlur stdDeviation="4"/></filter></defs><rect x="84" y="70" width="656" height="655" rx="10" fill="#000" opacity=".45" filter="url(#fsh)"/><rect x="76" y="61" width="656" height="656" rx="12" fill="url(#gdr)" stroke="#c9e8fb" stroke-width="4"/><path d="M232 125 H515 L630 240 V648 H232Z" fill="#f7fafd" stroke="#9a9a9a" stroke-width="6"/><path d="M515 125 V240 H630" fill="#fbfdff" stroke="#a8a8a8" stroke-width="5"/><rect x="283" y="178" width="227" height="18" fill="#a6a9ac"/><rect x="283" y="229" width="227" height="18" fill="#a6a9ac"/><rect x="283" y="279" width="297" height="18" fill="#a6a9ac"/><rect x="283" y="329" width="297" height="18" fill="#a6a9ac"/><rect x="283" y="379" width="297" height="18" fill="#a6a9ac"/><rect x="283" y="429" width="297" height="18" fill="#a6a9ac"/><rect x="283" y="480" width="297" height="18" fill="#a6a9ac"/><rect x="283" y="531" width="297" height="18" fill="#a6a9ac"/><rect x="283" y="581" width="297" height="18" fill="#a6a9ac"/><path d="M168 315 L383 290 V597 L168 572Z" fill="#5a7db3"/><text x="277" y="490" font-size="140" font-weight="700" fill="#fff" text-anchor="middle" font-family="Liberation Sans, sans-serif" textLength="112" lengthAdjust="spacingAndGlyphs">W</text></svg>
<div style="position:absolute;left:684px;top:505px;width:55px;height:20px;background:#fff;border:1px solid #767676;box-sizing:border-box"></div>
<svg style="position:absolute;left:689px;top:510px;" width="11" height="11" viewBox="0 0 11 11"><path d="M4.9 0.2 V10 M0 5.1 H9.8" stroke="#1010d0" stroke-width="2"/></svg>
<span class="t" id="t143" style="top:505px;font-size:12px;color:#2626c8;letter-spacing:-0.225px;left:704.58px;">Copy</span>
<svg style="position:absolute;left:672.5px;top:490.8px;" width="20" height="33" viewBox="0 0 20 33"><defs><linearGradient id="gcur" x1="0" y1="0" x2="0" y2="1"><stop offset="0" stop-color="#2a1206"/><stop offset=".45" stop-color="#2a1206"/><stop offset=".55" stop-color="#0c0a08"/><stop offset="1" stop-color="#0c0a08"/></linearGradient></defs><path d="M0.6 0.9 V25.2 L6.3 19.9 L11 31 L15.2 29.2 L10.4 18.6 H17.9Z" fill="url(#gcur)"/></svg></div>
</body></html>
